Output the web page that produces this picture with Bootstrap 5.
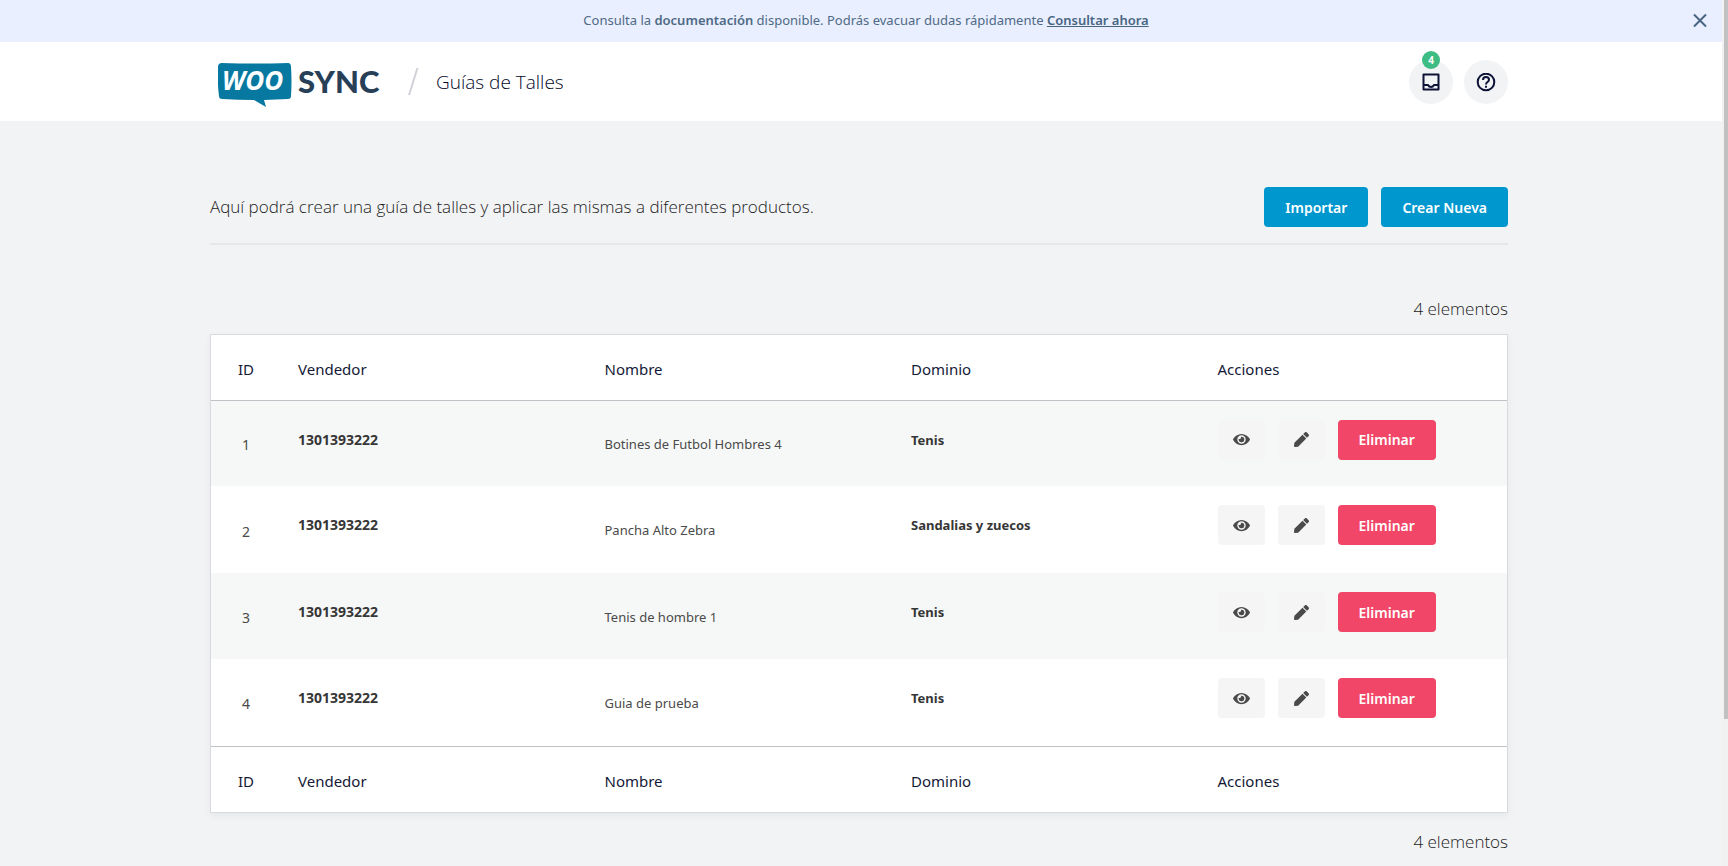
<!DOCTYPE html>
<html lang="es">
<head>
<meta charset="utf-8">
<meta name="viewport" content="width=device-width, initial-scale=1">
<title>WooSync - Guías de Talles</title>
<link href="https://cdn.jsdelivr.net/npm/bootstrap@5.3.0/dist/css/bootstrap.min.css" rel="stylesheet">
<style>
  body { font-family: "Noto Sans", "Open Sans", sans-serif; background: #f2f3f5; color: #4a4a4a; padding-right: 6px; min-height: 100vh; }
  .wrap { max-width: 1298px; }
  .shell { padding-right: 4px; }
  .notice { background: #e9efff; color: #4f6a85; font-size: 13px; line-height: 20px; padding: 10px 0 12px 10px; }
  .notice a { color: #476582; }
  .notice-close { right: 12px; top: 10px; width: 20px; height: 20px; color: #476582; line-height: 0; }
  .topbar { height: 79px; }
  .lite { font-family: "Open Sans", "Noto Sans", sans-serif; font-weight: 300; font-size: 17px; line-height: 26px; color: #1c1c1c; }
  .crumb { color: #04082a; font-size: 19px; }
  .round-btns { gap: 11px; }
  .round-btn { width: 44px; height: 44px; background: #f2f3f5; color: #0d1237; }
  .count { top: -9px; left: 13px; width: 18px; height: 18px; background: #3dbd83; font-size: 10px; line-height: 18px; }
  .intro { margin-top: 66px; padding-bottom: 16px; border-bottom: 2px solid #e6e7e9; }
  .act { height: 40px; border: 0; border-radius: 4px; color: #fff; font-size: 14px; font-weight: 600; padding: 0 21px; }
  .act:hover { color: #fff; }
  .act-blue { background: #0097cf; }
  .act-red { background: #f14668; }
  .act-icon { background: #f5f5f5; color: #4a4a4a; width: 47px; padding: 0; line-height: 0; }
  .acts { gap: 13px; }
  .total-top { margin: 51px 0 12px; }
  .sheet { background: #fff; border: 1px solid #d9dadd; box-shadow: 0 3px 8px rgba(10,10,10,.05); }
  .guides { table-layout: fixed; --bs-table-bg: transparent; }
  .guides > :not(caption) > * > * { padding: 3px 17px 0; border: 0; box-shadow: none; background: transparent; }
  .guides th, .guides td { color: #4a4a4a; }
  .guides .col-id { width: 70px; text-align: center; padding-left: 0; padding-right: 0; }
  .guides thead th, .guides tfoot th { height: 65px; vertical-align: middle; font-weight: 400; font-size: 15px; color: #141938; }
  .guides tfoot th { height: 66px; }
  .guides > tbody { border-top: 1px solid #bfc2c6; border-bottom: 1px solid #bfc2c6; }
  .guides tbody tr { height: 86px; }
  .guides tbody tr:nth-child(even) { height: 87px; }
  .guides tbody tr:nth-child(odd) { background: #f6f8f7; }
  .guides tbody td { vertical-align: middle; font-size: 13px; }
  .guides tbody .col-id { font-size: 14px; }
  .guides > tbody > tr > .upper { vertical-align: top; padding-top: 19px; line-height: 40px; font-weight: 700; color: #363636; }
  .guides tbody .seller { font-size: 14px; }
  .scroll-rail { width: 6px; background: #f1f1f1; padding-left: 2px; }
  .scroll-thumb { height: 83vh; background: #c1c1c1; }
</style>
</head>
<body>

<svg class="d-none" aria-hidden="true">
  <symbol id="eye" viewBox="0 0 576 512"><path fill="currentColor" d="M572.52 241.4C518.29 135.59 410.93 64 288 64S57.68 135.64 3.48 241.41a32.35 32.35 0 0 0 0 29.19C57.71 376.41 165.07 448 288 448s230.32-71.64 284.52-177.41a32.35 32.35 0 0 0 0-29.19zM288 400a144 144 0 1 1 144-144 143.93 143.93 0 0 1-144 144zm0-240a95.31 95.31 0 0 0-25.31 3.79 47.85 47.85 0 0 1-66.9 66.9A95.78 95.78 0 1 0 288 160z"/></symbol>
  <symbol id="pen" viewBox="0 0 512 512"><path fill="currentColor" d="M290.74 93.24l128.02 128.02-277.99 277.99-114.14 12.6C11.35 513.54-1.56 500.62.14 485.34l12.7-114.22 277.9-277.88zm207.2-19.06l-60.11-60.11c-18.75-18.75-49.16-18.75-67.91 0l-56.55 56.55 128.02 128.02 56.55-56.55c18.75-18.76 18.75-49.16 0-67.91z"/></symbol>
</svg>

<div class="notice position-relative text-center">
  Consulta la <strong class="fw-semibold">documentación</strong> disponible. Podrás evacuar dudas rápidamente <a href="#" class="fw-semibold">Consultar ahora</a>
  <button type="button" class="notice-close btn p-0 border-0 position-absolute" aria-label="Cerrar">
    <svg width="20" height="20" viewBox="0 0 20 20" fill="none" stroke="currentColor" stroke-width="2"><path d="M4 4.500l12 12M16 4.500l-12 12"/></svg>
  </button>
</div>

<header class="bg-white">
  <div class="shell">
    <div class="wrap topbar mx-auto d-flex align-items-center">
      <a href="#" class="ms-2 pt-1 d-block lh-1" aria-label="WooSync">
        <svg width="166" height="46" viewBox="0 0 166 46">
          <path fill="#0779a1" d="M4 2Q37 3 70 2Q73 2 73 6Q74 20 73 35Q73 38 70 38L46 39L48 46L36 39Q20 39 4 38Q1 38 1 35Q-1 20 0 6Q0 2 4 2Z"/>
          <text x="4" y="29" font-family="Open Sans, sans-serif" font-size="26" font-weight="700" font-style="italic" fill="#fff">WOO</text>
          <text x="80" y="32" font-family="Lato, sans-serif" font-size="31" font-weight="900" fill="#274058">SYNC</text>
        </svg>
      </a>
      <svg class="ms-4" width="12" height="30" viewBox="0 0 12 30" aria-hidden="true"><path d="M9.500 1L1 28" stroke="#d0d2d8" stroke-width="2"/></svg>
      <span class="crumb lite ms-3">Guías de Talles</span>
      <div class="round-btns ms-auto d-flex">
        <button type="button" class="round-btn btn p-0 border-0 rounded-circle position-relative" aria-label="Notificaciones">
          <svg width="20" height="20" viewBox="0 0 20 20" fill="none" stroke="currentColor" stroke-width="2" stroke-linejoin="round"><path d="M2.500 1.500h15v15h-15zM2.500 12h4.500q1 2 3 2t3-2h4.500"/></svg>
          <span class="count position-absolute rounded-circle text-white fw-bold">4</span>
        </button>
        <button type="button" class="round-btn btn p-0 border-0 rounded-circle" aria-label="Ayuda">
          <svg width="20" height="20" viewBox="0 1 20 20" fill="none" stroke="currentColor" stroke-width="2"><circle cx="10" cy="10" r="8.300"/><path d="M7 8q0-3 3-3t3 2.700q0 1.300-1.500 2.300T10 12.500M10 13.700v2"/></svg>
        </button>
      </div>
    </div>
  </div>
</header>

<main class="shell">
  <div class="wrap mx-auto">
    <div class="intro d-flex align-items-center justify-content-between">
      <p class="lite mb-0">Aquí podrá crear una guía de talles y aplicar las mismas a diferentes productos.</p>
      <div class="acts d-flex">
        <button type="button" class="btn act act-blue">Importar</button>
        <button type="button" class="btn act act-blue">Crear Nueva</button>
      </div>
    </div>

    <p class="lite total-top text-end">4 elementos</p>

    <div class="sheet">
      <table class="table guides mb-0">
        <thead><tr><th class="col-id">ID</th><th>Vendedor</th><th>Nombre</th><th>Dominio</th><th>Acciones</th></tr></thead>
        <tbody>
          <tr><td class="col-id">1</td><td class="upper seller">1301393222</td><td>Botines de Futbol Hombres 4</td><td class="upper">Tenis</td>
            <td class="upper"><div class="acts d-flex"><button type="button" class="btn act act-icon" aria-label="Ver"><svg width="17" height="15"><use href="#eye"/></svg></button><button type="button" class="btn act act-icon" aria-label="Editar"><svg width="15" height="15"><use href="#pen"/></svg></button><button type="button" class="btn act act-red">Eliminar</button></div></td></tr>
          <tr><td class="col-id">2</td><td class="upper seller">1301393222</td><td>Pancha Alto Zebra</td><td class="upper">Sandalias y zuecos</td>
            <td class="upper"><div class="acts d-flex"><button type="button" class="btn act act-icon" aria-label="Ver"><svg width="17" height="15"><use href="#eye"/></svg></button><button type="button" class="btn act act-icon" aria-label="Editar"><svg width="15" height="15"><use href="#pen"/></svg></button><button type="button" class="btn act act-red">Eliminar</button></div></td></tr>
          <tr><td class="col-id">3</td><td class="upper seller">1301393222</td><td>Tenis de hombre 1</td><td class="upper">Tenis</td>
            <td class="upper"><div class="acts d-flex"><button type="button" class="btn act act-icon" aria-label="Ver"><svg width="17" height="15"><use href="#eye"/></svg></button><button type="button" class="btn act act-icon" aria-label="Editar"><svg width="15" height="15"><use href="#pen"/></svg></button><button type="button" class="btn act act-red">Eliminar</button></div></td></tr>
          <tr><td class="col-id">4</td><td class="upper seller">1301393222</td><td>Guia de prueba</td><td class="upper">Tenis</td>
            <td class="upper"><div class="acts d-flex"><button type="button" class="btn act act-icon" aria-label="Ver"><svg width="17" height="15"><use href="#eye"/></svg></button><button type="button" class="btn act act-icon" aria-label="Editar"><svg width="15" height="15"><use href="#pen"/></svg></button><button type="button" class="btn act act-red">Eliminar</button></div></td></tr>
        </tbody>
        <tfoot><tr><th class="col-id">ID</th><th>Vendedor</th><th>Nombre</th><th>Dominio</th><th>Acciones</th></tr></tfoot>
      </table>
    </div>

    <p class="lite text-end mt-3 mb-0">4 elementos</p>
  </div>
</main>

<div class="scroll-rail position-fixed top-0 end-0 bottom-0" aria-hidden="true"><div class="scroll-thumb"></div></div>

<script src="https://cdn.jsdelivr.net/npm/bootstrap@5.3.0/dist/js/bootstrap.bundle.min.js"></script>
</body>
</html>
